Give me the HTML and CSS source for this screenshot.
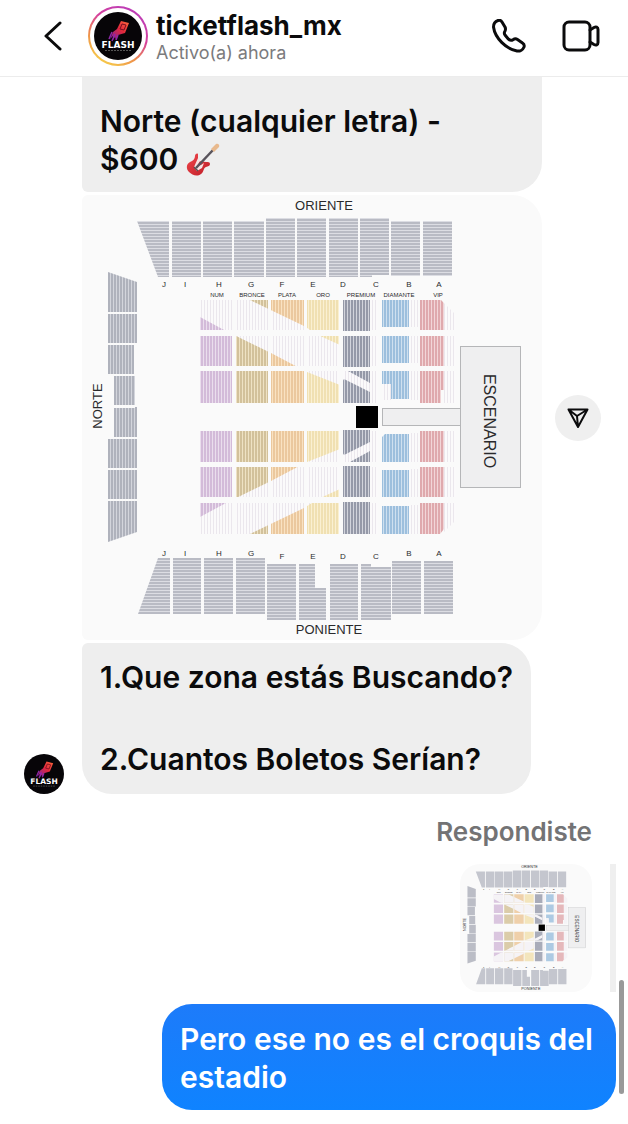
FILE: index.html
```html
<!DOCTYPE html>
<html lang="es">

<head>
    <meta charset="UTF-8">
    <meta name="viewport" content="width=device-width, initial-scale=1.0">
    <title>ticketflash_mx</title>

    <link rel="stylesheet" href="styles.css">
</head>

<body>
    <!-- shared fills -->
    <svg class="defs" aria-hidden="true">
        <defs>
            <linearGradient id="flame" x1="1" y1="0" x2="0" y2="1">
                <stop offset="0" stop-color="#ff6a3c" />
                <stop offset="0.45" stop-color="#e0283c" />
                <stop offset="1" stop-color="#7a1fa8" />
            </linearGradient>
            <linearGradient id="wood" x1="0" y1="0" x2="1" y2="1">
                <stop offset="0" stop-color="#f0474c" />
                <stop offset="1" stop-color="#bd1c26" />
            </linearGradient>

            <pattern id="stand" width="4" height="3" patternUnits="userSpaceOnUse">
                <rect width="4" height="3" fill="#dcdde3" />
                <rect width="4" height="2" fill="#b9bbc4" />
            </pattern>
            <pattern id="side" width="3" height="4" patternUnits="userSpaceOnUse">
                <rect width="3" height="4" fill="#d3d5dc" />
                <rect width="2" height="4" fill="#afb2bc" />
            </pattern>
            <pattern id="lila" width="3" height="4" patternUnits="userSpaceOnUse">
                <rect width="3" height="4" fill="#eadeed" />
                <rect width="2" height="4" fill="#d3bbd9" />
            </pattern>
            <pattern id="bronze" width="3" height="4" patternUnits="userSpaceOnUse">
                <rect width="3" height="4" fill="#eee2c4" />
                <rect width="2" height="4" fill="#d2c19b" />
            </pattern>
            <pattern id="plata" width="3" height="4" patternUnits="userSpaceOnUse">
                <rect width="3" height="4" fill="#f9e2c2" />
                <rect width="2" height="4" fill="#ebc89e" />
            </pattern>
            <pattern id="oro" width="3" height="4" patternUnits="userSpaceOnUse">
                <rect width="3" height="4" fill="#faf0d2" />
                <rect width="2" height="4" fill="#f0e0b2" />
            </pattern>
            <pattern id="premium" width="3" height="4" patternUnits="userSpaceOnUse">
                <rect width="3" height="4" fill="#d2d4dc" />
                <rect width="2" height="4" fill="#9599a8" />
            </pattern>
            <pattern id="diamante" width="3" height="4" patternUnits="userSpaceOnUse">
                <rect width="3" height="4" fill="#cfe0ef" />
                <rect width="2" height="4" fill="#9dbfdd" />
            </pattern>
            <pattern id="vip" width="3" height="4" patternUnits="userSpaceOnUse">
                <rect width="3" height="4" fill="#f2d6d8" />
                <rect width="2" height="4" fill="#dfa9ad" />
            </pattern>
            <pattern id="empty" width="3" height="4" patternUnits="userSpaceOnUse">
                <rect width="3" height="4" fill="#fbfafb" />
                <rect width="1" height="4" fill="#ebe7ed" />
            </pattern>

            <clipPath id="blocks">
                <path d="M200 300h32v30h-32zM236 300h32v30h-32zM271 300h33v30h-33zM307 300h32v30h-32zM343 300h27v31h-27z
                    M200 336h32v30h-32zM236 336h32v30h-32zM271 336h33v30h-33zM307 336h32v30h-32zM343 336h27v31h-27z
                    M200 371h32v32h-32zM236 371h32v32h-32zM271 371h33v32h-33zM307 371h32v32h-32zM343 371h27v32h-27z
                    M200 431h32v31h-32zM236 431h32v31h-32zM271 431h33v31h-33zM307 431h32v31h-32zM343 430h27v32h-27z
                    M200 467h32v30h-32zM236 467h32v30h-32zM271 467h33v30h-33zM307 467h32v30h-32zM343 466h27v31h-27z
                    M200 503h32v31h-32zM236 503h32v31h-32zM271 503h33v31h-33zM307 503h32v31h-32zM343 502h27v32h-27z" />
            </clipPath>
        </defs>
    </svg>

    <header class="topbar">
        <button type="button" class="icon-btn back" aria-label="Atrás">
            <svg width="18" height="30" viewBox="0 0 18 30">
                <path d="M16 2L2 15l14 13" />
            </svg>
        </button>
        <span class="avatar-ring">
            <svg class="avatar" width="48" height="48" viewBox="0 0 48 48">
                <g id="logo">
                    <circle cx="24" cy="24" r="24" fill="#070508" />
                    <path d="M27 9l8 2-4 10-7 2-2 5-1-3-2 3v-4l-3 3 3-7 4-3z" fill="url(#flame)" />
                    <path d="M28 12l4 1-2 5-4-1z" fill="none" stroke="#7a1020" />
                    <path d="M18 20l-3 7M21 22l-3 7M24 23l-2 5" stroke="#8d28a8" stroke-width="1.5" />
                    <text x="24" y="36" class="logo-name">FLASH</text>
                    <path d="M11 38.500h27" stroke="#555" stroke-width="1" stroke-dasharray="2 1" />
                </g>
            </svg>
        </span>
        <div class="who">
            <h1>ticketflash_mx</h1>
            <p>Activo(a) ahora</p>
        </div>
        <button type="button" class="icon-btn" aria-label="Llamar">
            <svg width="34" height="34" viewBox="0 0 34 34">
                <path d="M6 1.500C3 2.500 1.500 5 1.500 8 3 19 14 30 25 32c3 .5 6-1.500 7-4 .5-1.500 0-3-1.500-4l-5-3.500c-1.500-1-3-.8-4.500.2-1.500 1-3 .8-4.500-.5L13 16c-1-1.500-1-2.500 0-4 .8-1.500.7-2.500 0-4l-3-5C9 1.500 7.500 1 6 1.500z" />
            </svg>
        </button>
        <button type="button" class="icon-btn" aria-label="Videollamada">
            <svg width="38" height="32" viewBox="0 0 38 32">
                <rect x="2" y="2" width="26" height="28" rx="5" />
                <path d="M28 10l4-2.500c2-1 4-.5 4 2v13c0 2.500-2 3-4 2L28 22" />
            </svg>
        </button>
    </header>

    <main class="chat">
        <p class="bubble in first">Norte (cualquier letra) -<br>$600
            <svg class="guitar" width="34" height="34" viewBox="0 0 34 34" role="img" aria-label="guitarra">
                <path d="M12 11c-1-1-3 0-3 2 0 3-2 5-5 6-4 2-4 7-1 10s8 5 12 2c3-2 2-6 5-7 2-1 4-1 4-3s-2-2-4-2l-8-1z" fill="url(#wood)" />
                <path d="M12 15l2 3-3 5 4-1 3-2-2 5-5 3-3-4z" fill="#f6e4e4" />
                <path d="M10 25L27 7" stroke="#59545c" stroke-width="2.500" />
                <path d="M8 24l4 4" stroke="#555" stroke-width="1.500" />
                <path d="M25 6l5-5c2-1 4 1 3 3l-5 5z" fill="#e8b98d" />
            </svg>
        </p>

        <div class="media-row">
            <svg class="map" viewBox="82 195 460 445" role="img" aria-label="Croquis del estadio">
                <g id="venue">
                    <!-- oriente -->
                    <path fill="url(#stand)" d="M137 221h32v56h-11zM172 221h29v56h-29zM203 221h29v56h-29zM234 221h30v56h-30z
                        M266 218h29v59h-29zM297 218h29v59h-29zM329 218h29v59h-29zM360 218h29v57h-17v2h-12z
                        M391 221h29v55h-29zM423 221h29v55h-29z" />
                    <!-- poniente -->
                    <path fill="url(#stand)" d="M158 558h12v56h-32zM173 558h28v56h-28zM204 558h29v56h-29zM236 558h29v56h-29z
                        M267 564h29v56h-29zM299 564h16v24h11v32h-27zM330 564h28v56h-28zM361 564h10v3h20v53h-30z
                        M392 561h29v53h-29zM424 561h29v53h-29z" />
                    <!-- norte -->
                    <path fill="url(#side)" d="M108 272l29 10v30h-29zM108 314h29v29h-29zM108 345h26v29h-26zM114 376h21v29h-21z
                        M114 408h21v-1h2v30h-23zM108 439h29v29h-29zM108 470h29v29h-29zM108 501h29v31l-29 10z" />

                    <!-- floor -->
                    <path fill="url(#lila)" d="M200 300h32v30h-32zM200 336h32v30h-32zM200 371h32v32h-32zM200 431h32v31h-32zM200 467h32v30h-32zM200 503h32v31h-32z" />
                    <path fill="url(#bronze)" d="M236 300h32v30h-32zM236 336h32v30h-32zM236 371h32v32h-32zM236 431h32v31h-32zM236 467h32v30h-32zM236 503h32v31h-32z" />
                    <path fill="url(#plata)" d="M271 300h33v30h-33zM271 336h33v30h-33zM271 371h33v32h-33zM271 431h33v31h-33zM271 467h33v30h-33zM271 503h33v31h-33z" />
                    <path fill="url(#oro)" d="M307 300h32v30h-32zM307 336h32v30h-32zM307 371h32v32h-32zM307 431h32v31h-32zM307 467h32v30h-32zM307 503h32v31h-32z" />
                    <path fill="url(#premium)" d="M343 300h27v31h-27zM343 336h27v31h-27zM343 371h27v32h-27zM343 430h27v32h-27zM343 466h27v31h-27zM343 502h27v32h-27z" />
                    <path fill="url(#diamante)" d="M382 300h27v27h-27zM382 336h27v27h-27zM382 371h27v28h-18v-15h-9zM385 434h24v28h-27v-25zM382 470h27v27h-27zM382 506h27v28h-27z" />
                    <path fill="url(#vip)" d="M420 300h21l3 3v27h-24zM420 336h24v30h-24zM420 371h24v19h-3v13h-21zM420 431h24v31h-24zM420 467h24v30h-24zM420 503h24v26l-4 5h-20z" />
                    <path fill="url(#empty)" d="M370 300h8v30h-8zM370 336h8v30h-8zM370 371h8v32h-8zM370 431h8v31h-8zM370 467h8v30h-8zM370 503h8v31h-8z
                        M409 300h9v27h-9zM409 336h9v27h-9zM409 371h9v29h-9zM382 384h9v16h-9zM409 433h9v29h-9zM409 469h9v28h-9zM409 505h9v29h-9z
                        M444 303l12 12v15h-12zM444 336h12v30h-12zM444 371h12v32h-12zM444 431h12v31h-12zM444 467h12v30h-12zM444 503h12v17l-12 12z" />
                    <!-- aisles, the lower one mirrors the upper -->
                    <g clip-path="url(#blocks)" fill="url(#empty)">
                        <path id="aisle" d="M200 300h50l54 26 14 9 22 10v26h8l22 12v9l-26-13-4 6-33-13-36-19-45-22-26-14z" />
                        <use href="#aisle" transform="matrix(1 0 0 -1 0 834)" />
                    </g>

                    <!-- stage -->
                    <rect x="382.500" y="408.500" width="80" height="17" class="stage" />
                    <rect x="460.500" y="346.500" width="60" height="141" class="stage" />
                    <rect x="356" y="406" width="22" height="22" />

                    <g class="map-side">
                        <text x="324" y="210">ORIENTE</text>
                        <text x="329" y="634">PONIENTE</text>
                        <text transform="translate(102 406) rotate(-90)">NORTE</text>
                    </g>
                    <text class="map-stage" transform="translate(484 421) rotate(90)">ESCENARIO</text>
                    <g class="map-letter">
                        <text x="164" y="287">J</text>
                        <text x="185" y="287">I</text>
                        <text x="219" y="287">H</text>
                        <text x="251" y="287">G</text>
                        <text x="282" y="287">F</text>
                        <text x="313" y="287">E</text>
                        <text x="343" y="287">D</text>
                        <text x="376" y="287">C</text>
                        <text x="409" y="287">B</text>
                        <text x="439" y="287">A</text>
                        <text x="164" y="556">J</text>
                        <text x="185" y="556">I</text>
                        <text x="219" y="556">H</text>
                        <text x="251" y="556">G</text>
                        <text x="282" y="559">F</text>
                        <text x="313" y="559">E</text>
                        <text x="343" y="559">D</text>
                        <text x="376" y="559">C</text>
                        <text x="409" y="556">B</text>
                        <text x="439" y="556">A</text>
                    </g>
                    <g class="map-zone">
                        <text x="217" y="297">NUM</text>
                        <text x="252" y="297">BRONCE</text>
                        <text x="287" y="297">PLATA</text>
                        <text x="323" y="297">ORO</text>
                        <text x="361" y="297">PREMIUM</text>
                        <text x="399" y="297">DIAMANTE</text>
                        <text x="438" y="297">VIP</text>
                    </g>
                </g>
            </svg>
            <button type="button" class="share" aria-label="Compartir">
                <svg width="22" height="22" viewBox="0 0 22 22">
                    <path d="M1.500 2.500h19L11 20zM11 20L10 9 1.500 2.500M10 9l10.500-6.500" />
                </svg>
            </button>
        </div>

        <div class="last-row">
            <svg class="avatar" width="40" height="40" viewBox="0 0 48 48"><use href="#logo" /></svg>
            <p class="bubble in last">1.Que zona estás Buscando?<br><br>2.Cuantos Boletos Serían?</p>
        </div>

        <p class="reply-label">Respondiste</p>
        <div class="reply-quote">
            <svg class="thumb" viewBox="82 195 460 445" role="img" aria-label="Croquis del estadio"><use href="#venue" /></svg>
        </div>
        <p class="bubble out">Pero ese no es el croquis del estadio</p>
        <span class="scroll-thumb"></span>
    </main>
</body>

</html>
```
FILE: styles.css
```css
* {
    box-sizing: border-box;
}

body {
    margin: 0;
    background: #fff;
    color: #0b0b0c;
    font-family: Inter, "Liberation Sans", sans-serif;
}

h1,
p {
    margin: 0;
}

svg {
    display: block;
    flex: none;
}

button {
    padding: 0;
    border: 0;
    background: none;
    cursor: pointer;
}

.defs {
    position: absolute;
    width: 0;
    height: 0;
}

/* header */
.topbar {
    display: flex;
    align-items: center;
    height: 77px;
    padding: 0 28px 4px 44px;
    border-bottom: 1px solid #ececec;
}

.icon-btn {
    margin-left: 36px;
}

.icon-btn path,
.icon-btn rect {
    fill: none;
    stroke: #0b0b0c;
    stroke-width: 3;
    stroke-linecap: round;
    stroke-linejoin: round;
}

.back {
    margin: 0 26px 0 0;
}

.avatar-ring {
    flex: none;
    padding: 4px;
    border: 2px solid transparent;
    border-radius: 50%;
    background: linear-gradient(#fff, #fff) padding-box, linear-gradient(30deg, #f7d04a 10%, #ee8f4a 35%, #d6409c 60%, #b03bc4) border-box;
}

.logo-name {
    fill: #fff;
    font: bold 9px "DejaVu Sans", sans-serif;
    text-anchor: middle;
}

.who {
    flex: 1;
    margin-left: 8px;
    padding-top: 4px;
}

.who h1 {
    font-size: 26px;
    font-weight: 700;
    line-height: 30px;
}

.who p {
    color: #7b7b7d;
    font-size: 18px;
    line-height: 24px;
}

/* messages */
.chat {
    position: relative;
    padding-bottom: 13px;
}

.bubble {
    padding: 16px 18px 14px;
    border-radius: 30px;
    font-size: 30px;
    font-weight: 600;
    line-height: 38px;
}

.in {
    background: #eee;
}

.first {
    margin: 0 86px 3px 82px;
    padding-top: 25px;
    border-radius: 0 0 30px 6px;
}

.guitar {
    display: inline-block;
    vertical-align: -7px;
}

.media-row {
    display: flex;
    align-items: center;
    gap: 13px;
    margin: 0 27px 3px 82px;
}

.map {
    flex: 1;
    min-width: 0;
    border-radius: 6px 30px 30px 6px;
    background: #fafafa;
}

.share {
    display: grid;
    place-items: center;
    width: 46px;
    height: 46px;
    border-radius: 50%;
    background: #efefef;
}

.share path {
    fill: none;
    stroke: #0b0b0c;
    stroke-width: 2;
    stroke-linejoin: round;
}

.last-row {
    display: flex;
    align-items: flex-end;
    gap: 18px;
    margin-left: 24px;
}

.last {
    padding: 14px 18px;
    border-radius: 6px 30px 30px 30px;
    line-height: 41px;
}

/* reply */
.reply-label {
    margin: 18px 36px 12px;
    color: #737375;
    font-size: 26px;
    font-weight: 600;
    line-height: 40px;
    text-align: right;
}

.reply-quote {
    display: flex;
    justify-content: flex-end;
    margin: 0 12px 12px;
    padding-right: 18px;
    border-right: 6px solid #efefef;
}

.thumb {
    width: 132px;
    border-radius: 20px;
    background: #fafafa;
}

.out {
    margin: 0 12px 0 162px;
    background: linear-gradient(#1d7bfa, #0f83ff);
    color: #fff;
}

.scroll-thumb {
    position: absolute;
    right: 4px;
    bottom: 29px;
    width: 5px;
    height: 114px;
    border-radius: 3px;
    background: #999;
}

/* venue map */
.stage {
    fill: #efeff0;
    stroke: #b5b6b8;
}

.map-side,
.map-stage,
.map-letter,
.map-zone {
    fill: #2a2a2c;
    font-family: "Liberation Sans", Arial, sans-serif;
    text-anchor: middle;
}

.map-side {
    font-size: 13px;
}

.map-stage {
    font-size: 16px;
}

.map-letter {
    font-size: 8px;
}

.map-zone {
    font-size: 6px;
}
```
